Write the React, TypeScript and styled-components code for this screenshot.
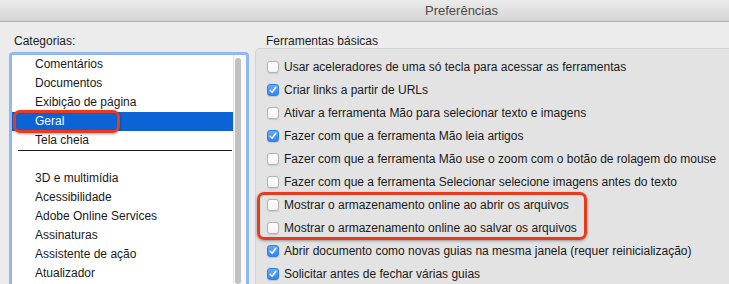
import React from 'react';
import styled, { createGlobalStyle } from 'styled-components';

const GlobalStyle = createGlobalStyle`
  html, body {
    margin: 0;
    padding: 0;
    background: #ececec;
    overflow: hidden;
  }
  body {
    font-family: "Liberation Sans", Arial, sans-serif;
    font-size: 12px;
    color: #1e1e1e;
    -webkit-font-smoothing: antialiased;
  }
`;

const Window = styled.div`
  width: 729px;
  height: 284px;
  overflow: hidden;
  background: #ececec;
  display: flex;
  flex-direction: column;
`;

const TitleBar = styled.div`
  height: 21px;
  flex: none;
  display: flex;
  align-items: center;
  padding-left: 425px;
  background: linear-gradient(#ececec, #d4d4d4);
  border-bottom: 1px solid #b3b3b3;
  color: #4b4b4b;
  font-size: 13px;
`;

const Body = styled.div`
  flex: 1;
  display: flex;
  min-height: 0;
`;

const LeftColumn = styled.div`
  width: 240px;
  flex: none;
  padding: 12px 0 0 9px;
  display: flex;
  flex-direction: column;
`;

const RightColumn = styled.div`
  flex: 1;
  padding: 12px 0 0 6px;
  display: flex;
  flex-direction: column;
  min-width: 0;
`;

const SectionLabel = styled.div<{ $indent?: number }>`
  height: 14px;
  line-height: 14px;
  padding-left: ${(p) => p.$indent ?? 0}px;
  font-size: 12px;
  color: #1e1e1e;
`;

const ListFrame = styled.div`
  margin-top: 4px;
  flex: 1;
  border: 3px solid #93b8ef;
  border-bottom: none;
  border-radius: 4px 4px 0 0;
  background: #fff;
  display: flex;
  overflow: hidden;
`;

const ListBody = styled.div`
  flex: 1;
  min-width: 0;
`;

const ListRow = styled.div<{ $selected?: boolean }>`
  position: relative;
  height: 19px;
  line-height: 19px;
  padding-left: 23px;
  white-space: nowrap;
  background: ${(p) => (p.$selected ? '#0b63d6' : 'transparent')};
  color: ${(p) => (p.$selected ? '#fff' : '#1a1a1a')};
`;

const Separator = styled.div`
  height: 1px;
  background: #1a1a1a;
  margin: 0 1px 18px 6px;
`;

const ScrollTrack = styled.div`
  width: 9px;
  flex: none;
  border-left: 1px solid #e2e2e2;
  padding: 3px 2px 0 1px;
  background: #fafafa;
`;

const ScrollThumb = styled.div`
  height: 100%;
  width: 6px;
  border-radius: 3px;
  background: #c1c1c1;
`;

const Callout = styled.div<{ $w: number; $h: number; $left: number; $top: number }>`
  position: absolute;
  left: ${(p) => p.$left}px;
  top: ${(p) => p.$top}px;
  width: ${(p) => p.$w}px;
  height: ${(p) => p.$h}px;
  box-sizing: border-box;
  border: 3px solid #ea3a1e;
  border-radius: 7px;
  box-shadow: 0 1px 3px rgba(0, 0, 0, 0.35), inset 0 0 1px rgba(0, 0, 0, 0.2);
  pointer-events: none;
`;

const GroupBox = styled.div`
  flex: 1;
  background: #e3e3e3;
  border: 1px solid #d3d3d3;
  border-right: none;
  border-bottom: none;
  border-radius: 5px 0 0 0;
  padding: 6px 0 0 11px;
`;

const HighlightGroup = styled.div`
  position: relative;
`;

const OptionRow = styled.label`
  display: flex;
  align-items: center;
  height: 23px;
  gap: 5px;
  white-space: nowrap;
  color: #1a1a1a;
`;

const Box = styled.span<{ $checked?: boolean }>`
  width: 12px;
  height: 12px;
  flex: none;
  box-sizing: border-box;
  border-radius: 3px;
  display: flex;
  align-items: center;
  justify-content: center;
  border: 1px solid ${(p) => (p.$checked ? '#2f7fe9' : '#b3b3b3')};
  background: ${(p) =>
    p.$checked ? 'linear-gradient(#68a9f8, #2f86f4)' : 'linear-gradient(#ffffff, #f4f4f4)'};
  box-shadow: 0 0.5px 1px rgba(0, 0, 0, 0.12);
`;

function Checkbox({ checked }: { checked?: boolean }) {
  return (
    <Box $checked={checked}>
      {checked && (
        <svg width="8" height="8" viewBox="0 0 8 8">
          <path d="M1.2 4.3 L3.1 6.3 L6.8 1.2" fill="none" stroke="#fff" strokeWidth="1.5" strokeLinecap="round" strokeLinejoin="round" />
        </svg>
      )}
    </Box>
  );
}

const topCategories = ['Comentários', 'Documentos', 'Exibição de página', 'Geral', 'Tela cheia'];
const moreCategories = [
  '3D e multimídia',
  'Acessibilidade',
  'Adobe Online Services',
  'Assinaturas',
  'Assistente de ação',
  'Atualizador',
];

interface Option {
  label: string;
  checked: boolean;
}

const optionsBefore: Option[] = [
  { label: 'Usar aceleradores de uma só tecla para acessar as ferramentas', checked: false },
  { label: 'Criar links a partir de URLs', checked: true },
  { label: 'Ativar a ferramenta Mão para selecionar texto e imagens', checked: false },
  { label: 'Fazer com que a ferramenta Mão leia artigos', checked: true },
  { label: 'Fazer com que a ferramenta Mão use o zoom com o botão de rolagem do mouse', checked: false },
  { label: 'Fazer com que a ferramenta Selecionar selecione imagens antes do texto', checked: false },
];

const optionsHighlighted: Option[] = [
  { label: 'Mostrar o armazenamento online ao abrir os arquivos', checked: false },
  { label: 'Mostrar o armazenamento online ao salvar os arquivos', checked: false },
];

const optionsAfter: Option[] = [
  { label: 'Abrir documento como novas guias na mesma janela (requer reinicialização)', checked: true },
  { label: 'Solicitar antes de fechar várias guias', checked: true },
];

function OptionList({ items }: { items: Option[] }) {
  return (
    <>
      {items.map((o) => (
        <OptionRow key={o.label}>
          <Checkbox checked={o.checked} />
          {o.label}
        </OptionRow>
      ))}
    </>
  );
}

export default function App() {
  return (
    <Window>
      <GlobalStyle />
      <TitleBar>Preferências</TitleBar>
      <Body>
        <LeftColumn>
          <SectionLabel $indent={5}>Categorias:</SectionLabel>
          <ListFrame>
            <ListBody>
              {topCategories.map((c) => (
                <ListRow key={c} $selected={c === 'Geral'}>
                  {c}
                  {c === 'Geral' && <Callout $left={1} $top={-2} $w={107} $h={23} />}
                </ListRow>
              ))}
              <Separator />
              {moreCategories.map((c) => (
                <ListRow key={c}>{c}</ListRow>
              ))}
            </ListBody>
            <ScrollTrack>
              <ScrollThumb />
            </ScrollTrack>
          </ListFrame>
        </LeftColumn>
        <RightColumn>
          <SectionLabel $indent={11}>Ferramentas básicas</SectionLabel>
          <GroupBox>
            <OptionList items={optionsBefore} />
            <HighlightGroup>
              <OptionList items={optionsHighlighted} />
              <Callout $left={-10} $top={-1} $w={330} $h={48} />
            </HighlightGroup>
            <OptionList items={optionsAfter} />
          </GroupBox>
        </RightColumn>
      </Body>
    </Window>
  );
}
